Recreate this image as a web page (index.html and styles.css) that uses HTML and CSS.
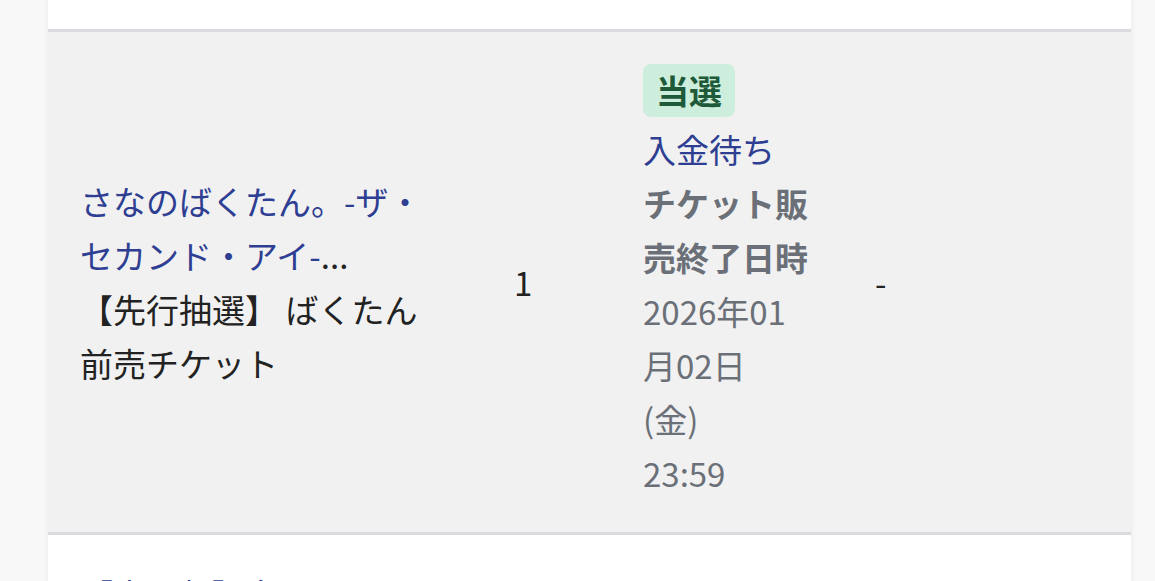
FILE: index.html
```html
<!DOCTYPE html>
<html lang="ja">
<head>
<meta charset="utf-8">
<title>申込履歴</title>
<link rel="stylesheet" href="styles.css">
</head>
<body>
<div class="card">
  <div class="row row-prev"></div>
  <div class="row row-active">
    <div class="cell cell-title">
      <a class="link" href="#">さなのばくたん。-ザ・セカンド・アイ-</a><span class="ellipsis">...</span><br>
      <span class="plain">【先行抽選】 ばくたん前売チケット</span>
    </div>
    <div class="cell cell-qty">1</div>
    <div class="cell cell-status">
      <span class="badge">当選</span>
      <a class="link status-link" href="#">入金待ち</a>
      <div class="label">チケット販売終了日時</div>
      <div class="date">2026年01<br>月02日<br>(金)<br>23:59</div>
    </div>
    <div class="cell cell-extra">-</div>
  </div>
  <div class="row row-next">
    <div class="cell cell-title">
      <a class="link" href="#">【夜の部】多聞さなの...</a>
    </div>
  </div>
</div>
</body>
</html>
```

FILE: styles.css
```css
html, body {
  margin: 0;
  padding: 0;
}
body {
  background: #f8f8f8;
  font-family: "Noto Sans CJK JP", "Noto Sans", sans-serif;
  font-size: 33px;
  line-height: 54px;
  color: #222;
  overflow: hidden;
  height: 581px;
}
.card {
  margin-left: 48px;
  width: 1083px;
  background: #fff;
  box-shadow: 0 0 6px rgba(0, 0, 0, 0.07);
}
.row {
  display: grid;
  grid-template-columns: 370px 65px 168px 1fr;
  column-gap: 64px;
  align-items: center;
  padding: 32px 32px;
  border-bottom: 3px solid #dadbde;
}
.row-prev {
  height: 29px;
  padding: 0;
}
.row-active {
  background: #f1f1f1;
}
.row-next {
  border-bottom: none;
}
.cell-title {
  max-width: 352px;
}
.link {
  color: #2e3e92;
  text-decoration: none;
}
.ellipsis {
  color: #222;
}
.cell-status {
  display: flex;
  flex-direction: column;
  align-items: flex-start;
}
.badge {
  display: inline-block;
  background: #cdeedc;
  color: #1e5a3a;
  font-weight: 700;
  line-height: 41px;
  padding: 6px 13px;
  border-radius: 8px;
  margin-bottom: 5px;
}
.label {
  color: #6b7078;
  font-weight: 700;
}
.date {
  color: #6b7078;
}
.cell-extra {
  color: #222;
}
```
